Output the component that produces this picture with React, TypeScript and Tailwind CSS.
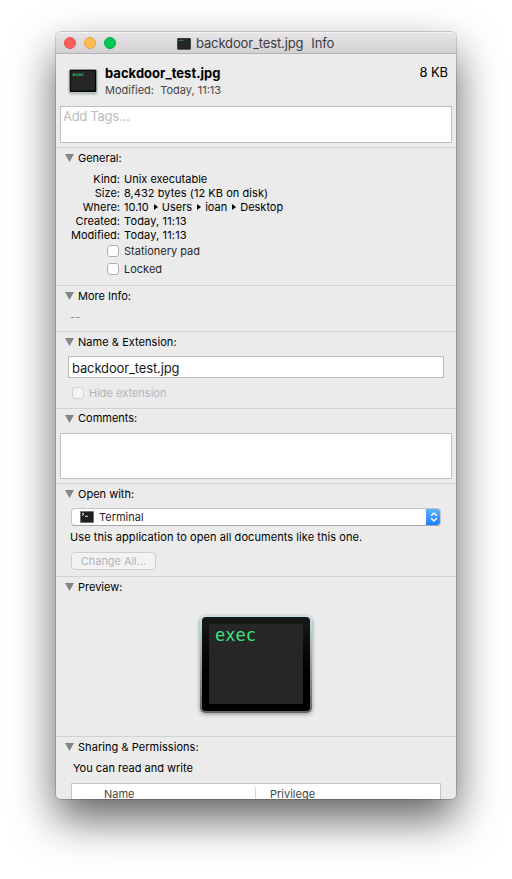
import type { ReactNode } from "react";

function ExecIcon({ className }: { className: string }) {
  return (
    <svg viewBox="0 0 28 24" className={className}>
      <rect width="28" height="24" rx="1.5" fill="#b5cacf" />
      <rect x="0.7" y="0.7" width="26.6" height="22.4" rx="1" fill="#050505" />
      <rect x="2" y="2" width="24" height="19.5" fill="#262626" />
      <text x="3.5" y="6.8" className="font-['DejaVu_Sans_Mono',monospace] text-[4.7px] font-bold" fill="#2fc869">exec</text>
    </svg>
  );
}

function Section({ title, className, titleClass = "", children }: { title: string; className: string; titleClass?: string; children?: ReactNode }) {
  return (
    <section className={`shrink-0 border-t border-[#d2d2d2] ${className}`}>
      <div className="flex h-5 items-center pl-[9px]">
        <svg viewBox="0 0 9 8" className="mr-1 h-2 w-[9px]">
          <path d="M0 0h9L4.5 8z" fill="#858585" />
        </svg>
        <h2 className={titleClass}>{title}</h2>
      </div>
      {children}
    </section>
  );
}

function Row({ label, children }: { label: string; children: ReactNode }) {
  return (
    <div className="flex h-3.5 items-center">
      <span className="mr-1 w-16 text-right whitespace-nowrap">{label}</span>
      {children}
    </div>
  );
}

function Check({ label, disabled = false, className = "" }: { label: string; disabled?: boolean; className?: string }) {
  return (
    <div className={`flex items-center ${disabled ? "text-[#b4b4b4]" : "text-[#262626]"} ${className}`}>
      <span className={`mr-[5px] size-3 rounded-[3px] border ${disabled ? "border-[#cfcfcf] bg-[#f4f4f4]" : "border-[#b0b0b0] bg-white"}`} />
      {label}
    </div>
  );
}

function Arrow() {
  return (
    <svg viewBox="0 0 4 6" className="mr-1 ml-[5px] h-1.5 w-1">
      <path d="M0 0l4 3-4 3z" fill="#000" />
    </svg>
  );
}

export default function App() {
  return (
    <div className="h-[879px] w-[512px] overflow-hidden bg-white pt-8 pl-14 font-['Inter',sans-serif] text-[11px] leading-[14px] text-black">
      <main className="h-[767px] w-[400px] rounded-[5px] shadow-[0_0_0_1px_rgba(0,0,0,0.16),0_20px_44px_rgba(0,0,0,0.62)]">
        <div className="flex h-full flex-col overflow-hidden rounded-[5px] bg-[#ebebeb] whitespace-nowrap">
          <header className="flex h-[22px] shrink-0 items-center border-b border-[#b2b0b2] bg-linear-to-b from-[#e8e6e8] to-[#d2d0d2] pt-px shadow-[inset_0_1px_0_#f3f3f3]">
            <div className="flex gap-2 pl-2">
              <span className="size-3 rounded-full border border-[#e64b4c] bg-[#fd5f5c]" />
              <span className="size-3 rounded-full border border-[#dfa243] bg-[#fdbc4b]" />
              <span className="size-3 rounded-full border border-[#00ad44] bg-[#00ca56]" />
            </div>
            <ExecIcon className="mt-px ml-[61px] h-3 w-3.5" />
            <span className="ml-[5px] text-[13px] tracking-[-0.14px] text-[#3c3c3c]">backdoor_test.jpg</span>
            <span className="ml-2 text-[13px] tracking-[-0.1px] text-[#3c3c3c]">Info</span>
          </header>

          <div className="flex h-[52px] shrink-0 pt-3">
            <ExecIcon className="mt-[3px] ml-[13px] h-6 w-7 drop-shadow-[0_1px_1px_rgba(0,0,0,0.3)]" />
            <div className="ml-2 flex-1">
              <h1 className="text-[13px] font-bold tracking-[0.03px]">backdoor_test.jpg</h1>
              <p className="mt-[3px] text-[#454545]">Modified:&nbsp; Today, 11:13</p>
            </div>
            <span className="-mt-px mr-2 text-[13px] tracking-[-0.1px]">8 KB</span>
          </div>

          <div className="mx-1 mb-1 h-[37px] shrink-0 border border-[#bebebe] bg-white px-0.5 pt-0.5 text-[13px] tracking-[-0.3px] text-[#bcbcbc]">Add Tags…</div>

          <Section title="General:" className="h-[138px]">
            <div className="pt-1">
              <Row label="Kind:">Unix executable</Row>
              <Row label="Size:"><span className="tracking-[0.06px]">8,432 bytes (12 KB on disk)</span></Row>
              <Row label="Where:">10.10<Arrow />Users<Arrow />ioan<Arrow />Desktop</Row>
              <Row label="Created:"><span className="tracking-[0.15px]">Today, 11:13</span></Row>
              <Row label="Modified:"><span className="tracking-[0.15px]">Today, 11:13</span></Row>
            </div>
            <Check label="Stationery pad" className="mt-0.5 ml-[51px]" />
            <Check label="Locked" className="mt-1 ml-[51px]" />
          </Section>

          <Section title="More Info:" className="h-[46px]">
            <p className="pt-1 pl-3.5 tracking-[0.2px] text-[#8a8a8a]">--</p>
          </Section>

          <Section title="Name &amp; Extension:" titleClass="tracking-[0.05px]" className="h-[77px]">
            <div className="mt-1 ml-3 flex h-[22px] w-[376px] items-center border border-[#b9b9b9] bg-white px-[3px] pt-0.5 text-[13px] tracking-[-0.14px] text-[#1a1a1a]">backdoor_test.jpg</div>
            <Check label="Hide extension" disabled className="mt-2 ml-4" />
          </Section>

          <Section title="Comments:" titleClass="pb-0.5" className="h-[75px]">
            <div className="mx-1 mt-1 h-[46px] border border-[#c0c0c0] bg-white" />
          </Section>

          <Section title="Open with:" className="h-[93px]">
            <div className="mt-1 ml-[15px] flex h-[18px] w-[370px] items-center overflow-hidden rounded-[4px] border border-[#c5c5c5] border-b-[#a5a5a5] bg-white text-[#262626]">
              <svg viewBox="0 0 14 12" className="mr-[5px] ml-2 h-3 w-3.5">
                <rect width="14" height="12" rx="0.5" fill="#969696" />
                <rect x="0.7" y="0.7" width="12.6" height="10.6" fill="#1e1e1e" />
                <path d="M2 2l2 1.3L2 4.6M5 5.3h3" fill="none" stroke="#fff" strokeWidth="0.9" />
              </svg>
              Terminal
              <span className="-my-px -mr-px ml-auto flex h-[18px] w-[15px] items-center justify-center bg-linear-to-b from-[#64b3f9] to-[#087dff]">
                <svg viewBox="0 0 8 10" className="h-2.5 w-2">
                  <path d="M1.2 3.8L4 1l2.8 2.8M1.2 6.2L4 9l2.8-2.8" fill="none" stroke="#fff" strokeWidth="1.4" />
                </svg>
              </span>
            </div>
            <p className="mt-1 ml-3.5 tracking-[0.07px]">Use this application to open all documents like this one.</p>
            <button className="mt-2 ml-[15px] block h-[18px] w-[85px] rounded-[4px] border border-[#cfcfcf] bg-[#f3f3f3] leading-4 tracking-[-0.05px] text-[#b3b3b3]">Change All…</button>
          </Section>

          <Section title="Preview:" className="h-[160px]">
            <div className="mt-[19px] ml-36 h-[97px] w-28 rounded-[5px] bg-linear-to-b from-[#c5e1e9] to-[#666] px-0.5 pt-px pb-0.5 shadow-[0_1px_4px_rgba(0,0,0,0.4)]">
              <div className="h-full rounded-[4px] bg-linear-to-b from-[#191919] to-black p-[7px]">
                <div className="h-20 w-[94px] bg-[#262626] pt-0.5 pl-1.5 font-['DejaVu_Sans_Mono',monospace] text-[17px] leading-[18px] text-[#39e57b]">exec</div>
              </div>
            </div>
          </Section>

          <Section title="Sharing &amp; Permissions:" titleClass="tracking-[0.05px]" className="h-[63px]">
            <p className="pt-1 pl-[17px]">You can read and write</p>
            <div className="mt-2 ml-[15px] flex h-[60px] w-[370px] border border-[#c6c6c6] bg-white pt-[3px] text-[#444]">
              <span className="w-[184px] border-r border-[#d9d9d9] pl-8">Name</span>
              <span className="pl-3.5">Privilege</span>
            </div>
          </Section>
        </div>
      </main>
    </div>
  );
}
